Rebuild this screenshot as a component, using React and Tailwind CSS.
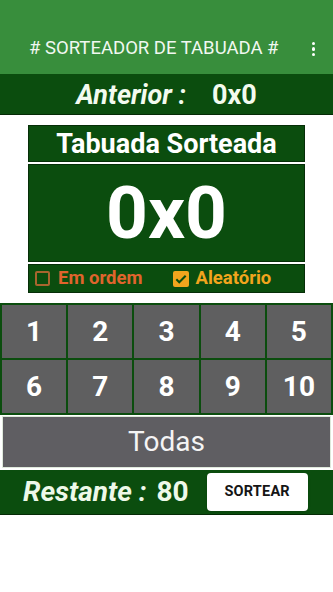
import { useState } from 'react';

const numbers = [1, 2, 3, 4, 5, 6, 7, 8, 9, 10];

export default function App() {
    const [aleatorio, setAleatorio] = useState(true);

    return (
        <div className="w-[333px] min-h-[592px] bg-white font-['Roboto',sans-serif]">
            {/* Toolbar */}
            <div className="h-[74px] bg-[#388e3c] flex items-center pt-[24px] pl-[29px] pr-[18px]">
                <h1 className="flex-1 text-[18.5px] text-[#f1f8f1] whitespace-nowrap">
                    # SORTEADOR DE TABUADA #
                </h1>
                <div className="flex flex-col gap-[2px] items-center">
                    <span className="w-[3.5px] h-[3.5px] rounded-full bg-white" />
                    <span className="w-[3.5px] h-[3.5px] rounded-full bg-white" />
                    <span className="w-[3.5px] h-[3.5px] rounded-full bg-white" />
                </div>
            </div>

            {/* Anterior */}
            <div className="h-[41px] bg-[#0b4d0e] border-b border-[#052a06] flex items-center justify-center pt-[2px] text-[#f3fbef] text-[27px] font-bold">
                <span className="italic">Anterior :</span>
                <span className="ml-[26px]">0x0</span>
            </div>

            {/* Tabuada Sorteada */}
            <div className="mt-[10px] mx-[28px] flex flex-col gap-[2px]">
                <div className="h-[37px] bg-[#0b4d0e] border border-[#062e08] flex items-center justify-center pt-[2px] text-white text-[27px] font-bold">
                    Tabuada Sorteada
                </div>
                <div className="h-[98px] bg-[#0b4d0e] border border-[#062e08] flex items-center justify-center text-white text-[73px] font-bold leading-none">
                    0x0
                </div>
                <div className="h-[29px] bg-[#0b4d0e] border border-[#062e08] flex items-center pl-[6px] text-[18.5px] font-bold">
                    <button onClick={() => setAleatorio(false)} className="flex items-center gap-[8px] text-[#e0642d]">
                        <span className={`w-[15px] h-[15px] rounded-[2px] border-2 ${!aleatorio ? 'bg-[#e0642d] border-[#e0642d]' : 'border-[#a8652e]'}`} />
                        Em ordem
                    </button>
                    <button onClick={() => setAleatorio(true)} className="ml-[30px] flex items-center gap-[7px] text-[#f2a51d]">
                        <span className={`w-[16px] h-[16px] rounded-[2px] flex items-center justify-center ${aleatorio ? 'bg-[#f2a51d]' : 'border-2 border-[#a8652e]'}`}>
                            {aleatorio && (
                                <svg viewBox="0 0 24 24" className="w-[14px] h-[14px]" fill="none" stroke="#0b4d0e" strokeWidth="3.5">
                                    <path d="M4 12.5l5 5L20 6.5" />
                                </svg>
                            )}
                        </span>
                        Aleatório
                    </button>
                </div>
            </div>

            {/* Numbers grid */}
            <div className="mt-[10px] bg-[#0b4d0e] p-[2px] grid grid-cols-5 gap-[2px]">
                {numbers.map(n => (
                    <button key={n} className="h-[53px] bg-[#5f5f60] text-white text-[28px] font-bold flex items-center justify-center">
                        {n}
                    </button>
                ))}
            </div>

            {/* Todas */}
            <button className="mt-[1px] mx-[2px] w-[329px] h-[52px] bg-[#5f5e62] border border-[#dfe9dc] text-[#f4f4f4] text-[28px] flex items-center justify-center">
                Todas
            </button>

            {/* Restante */}
            <div className="mt-[2px] h-[45px] bg-[#0b4d0e] border-b border-[#052a06] flex items-center pl-[23px]">
                <span className="text-[#eef9e9] text-[28px] font-bold italic">Restante :</span>
                <span className="ml-[10px] text-[#eef9e9] text-[28px] font-bold">80</span>
                <button className="ml-[18px] w-[101px] h-[38px] bg-white rounded-[4px] text-[14.5px] font-bold text-[#151515] tracking-[0.2px] shadow-sm">
                    SORTEAR
                </button>
            </div>
        </div>
    );
}
